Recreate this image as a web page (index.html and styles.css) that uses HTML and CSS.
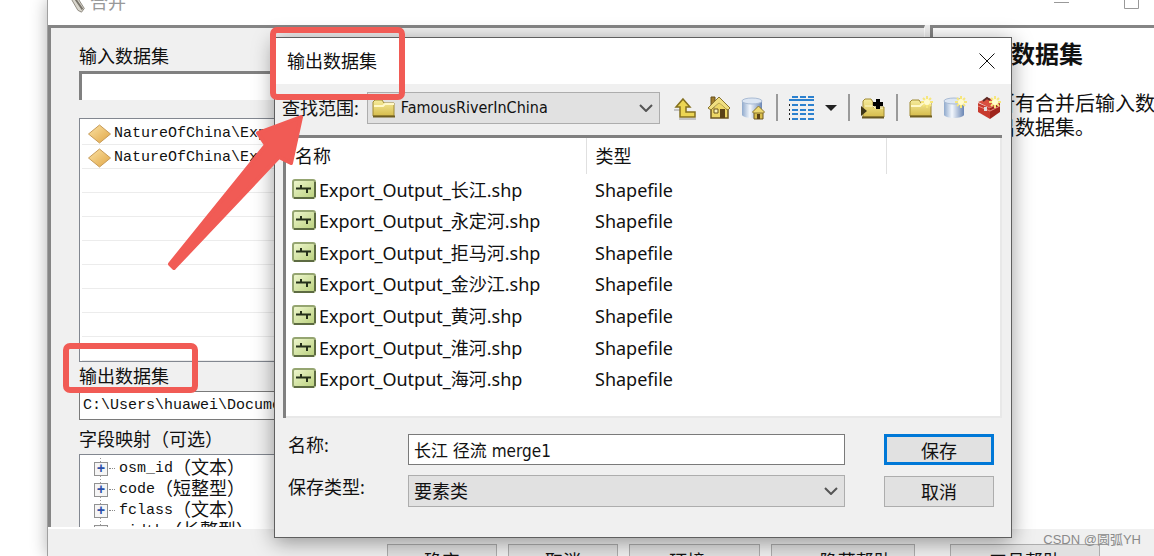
FILE: index.html
```html
<!DOCTYPE html>
<html lang="zh-CN">
<head>
  <meta charset="UTF-8">
  <meta name="viewport" content="width=device-width, initial-scale=1.0">
  <title>合并</title>
  <link rel="stylesheet" href="styles.css">
</head>
<body>
  <!-- Shared icons -->
  <svg class="defs" aria-hidden="true">
    <defs>
      <linearGradient id="gold" x1="0" y1="0" x2="0" y2="1">
        <stop offset="0" stop-color="#f6ec9c"/>
        <stop offset="1" stop-color="#d6bc4c"/>
      </linearGradient>
      <linearGradient id="amber" x1="0" y1="0" x2="1" y2="1">
        <stop offset="0" stop-color="#fbe3a6"/>
        <stop offset="1" stop-color="#e0a544"/>
      </linearGradient>
      <linearGradient id="steel" x1="0" y1="0" x2="1" y2="0">
        <stop offset="0" stop-color="#8fa9cc"/>
        <stop offset="0.4" stop-color="#f4f8fd"/>
        <stop offset="1" stop-color="#6a86b4"/>
      </linearGradient>
      <linearGradient id="green" x1="0" y1="0" x2="1" y2="1">
        <stop offset="0" stop-color="#f0f8d0"/>
        <stop offset="1" stop-color="#b9d07c"/>
      </linearGradient>
    </defs>
    <symbol id="diamond" viewBox="0 0 24 20">
      <path d="M1 10 12 1l11 9-11 9z" fill="url(#amber)" stroke="#c79b58"/>
    </symbol>
    <symbol id="folder" viewBox="0 0 24 20">
      <path d="M1 18V4l2-2h7l2 3h10v13z" fill="url(#gold)" stroke="#a08a35"/>
      <path d="M2 8h9l2-2h9" fill="none" stroke="#fff8c8" stroke-width="2"/>
      <path d="M1 18.500h22" stroke="#6e5d20" stroke-width="2"/>
    </symbol>
    <symbol id="line" viewBox="0 0 24 20">
      <rect x="1" y="1" width="22" height="18" rx="2" fill="url(#green)" stroke="#95a571" stroke-width="2"/>
      <path d="M2 19h20M23 3v15" stroke="#5d6b42" stroke-width="2"/>
      <path d="M4 9.500h15M9 6v4M15 9v5" fill="none" stroke="#25301a" stroke-width="2"/>
    </symbol>
    <symbol id="spark" viewBox="0 0 12 12">
      <path d="M6 0v12M0 6h12M2 2l8 8M10 2l-8 8" stroke="#f6e67c" stroke-width="2"/>
      <circle cx="6" cy="6" r="3" fill="#fffbd0"/>
    </symbol>
    <symbol id="cylinder" viewBox="0 0 24 24">
      <path d="M1 5v14c2 4 18 4 20 0V5z" fill="url(#steel)"/>
      <ellipse cx="11" cy="5" rx="10" ry="3" fill="#dce6f3" stroke="#a9bbd4"/>
    </symbol>
  </svg>

  <!-- Merge tool window -->
  <div class="window">
    <div class="window-title">
      <svg class="hammer" viewBox="0 0 20 26"><path d="M1 3 7 1l12 19-3 4-4-2z" fill="#d8d5cc" stroke="#8a867c"/><path d="M6 5l11 16" stroke="#77736a" stroke-width="2"/></svg>
      <span>合并</span>
      <div class="window-controls">
        <svg width="16" height="14"><path d="M0 8.500h15" stroke="#999"/></svg>
        <svg width="16" height="16"><path d="M.5.5h14v14H.5z" fill="none" stroke="#999"/></svg>
      </div>
    </div>

    <div class="panels">
      <div class="params">
        <label for="inputData">输入数据集</label>
        <input type="text" id="inputData" class="sunken">
        <ul class="datasets">
          <li><svg><use href="#diamond"/></svg>NatureOfChina\Export_Output_2</li>
          <li><svg><use href="#diamond"/></svg>NatureOfChina\Export_Output_3</li>
          <li></li>
          <li></li>
          <li></li>
          <li></li>
          <li></li>
          <li></li>
          <li></li>
          <li></li>
        </ul>
        <label for="outputData">输出数据集</label>
        <input type="text" id="outputData" value="C:\Users\huawei\Documents\ArcGIS\Default.gdb">
        <div class="heading">字段映射（可选）</div>
        <ul class="fields">
          <li><button type="button" aria-label="osm_id">+</button><i></i>osm_id<span>（文本）</span></li>
          <li><button type="button" aria-label="code">+</button><i></i>code<span>（短整型）</span></li>
          <li><button type="button" aria-label="fclass">+</button><i></i>fclass<span>（文本）</span></li>
          <li><button type="button" aria-label="width">+</button><i></i>width<span>（长整型）</span></li>
        </ul>
      </div>
      <div class="help">
        <h2>输出数据集</h2>
        <p>包含所有合并后输入数据集的<br>新输出数据集。</p>
      </div>
    </div>

    <div class="window-buttons">
      <button type="button">确定</button>
      <button type="button">取消</button>
      <button type="button" class="medium">环境...</button>
      <button type="button" class="wide">&lt;&lt; 隐藏帮助</button>
      <button type="button" class="wide last">工具帮助</button>
    </div>
  </div>

  <!-- Output dataset dialog -->
  <div class="dialog" role="dialog" aria-labelledby="dialogTitle">
    <div class="dialog-title">
      <span id="dialogTitle">输出数据集</span>
      <button type="button" aria-label="关闭"><svg width="16" height="16"><path d="M.5.5l15 15M15.500.5l-15 15" stroke="#111"/></svg></button>
    </div>

    <div class="toolbar">
      <label for="lookIn">查找范围:</label>
      <div class="select look-in">
        <svg class="folder"><use href="#folder"/></svg>
        <select id="lookIn"><option>FamousRiverInChina</option></select>
        <svg class="chevron" viewBox="0 0 14 8"><path d="M1 1l6 6 6-6"/></svg>
      </div>
      <div class="tools">
        <button type="button" aria-label="向上一级">
          <svg viewBox="0 0 24 24"><path d="M1 14h7M6 23h17" stroke="#c4c4c4" stroke-width="2"/><path d="M10 3l7 8h-4v5h9v5H7V11H3z" fill="#ecd654" stroke="#84701f" stroke-width="1.500"/></svg>
        </button>
        <button type="button" aria-label="主目录">
          <svg viewBox="0 0 24 24"><path d="M4 1h4v8H4z" fill="#a07c2c" stroke="#66501c"/><path d="M4 12h17v10H4z" fill="#edd766" stroke="#6c5720" stroke-width="1.500"/><path d="M12 1l11 11-2 2-2-1-7-6-8 7-3-2z" fill="#f0df80" stroke="#8a7430"/><path d="M12 7l7 6v1H5z" fill="#edd766"/><path d="M7 13h4v4H7z" fill="#fbf3b8" stroke="#6c5720"/><path d="M13 13h5v9h-5z" fill="#5b4317"/></svg>
        </button>
        <button type="button" aria-label="默认地理数据库">
          <svg viewBox="0 0 24 24"><use href="#cylinder"/><path d="M13 16h9v7h-9z" fill="#d9be4c" stroke="#6c5720"/><path d="M17.500 10l6 6-1 1h-10l-1-1z" fill="#eed970" stroke="#8a7430"/><path d="M16 18h3v5h-3z" fill="#5b4317"/></svg>
        </button>
        <i class="separator"></i>
        <button type="button" class="views" aria-label="视图">
          <svg viewBox="0 0 26 24"><path d="M3 1h22" stroke="#2c81cf" stroke-width="2" stroke-dasharray="6 2"/><path d="M0 4h25" stroke="#2c81cf" stroke-width="2"/><path d="M3 9h22M3 14h22M3 18h22M3 23h22" stroke="#2c81cf" stroke-width="2" stroke-dasharray="6 2"/><path d="M0 9h1M0 14h1M0 18h1M0 23h1" stroke="#222" stroke-width="2"/></svg>
          <svg class="caret" viewBox="0 0 12 6"><path d="M0 0h12L6 6z" fill="#222"/></svg>
        </button>
        <i class="separator"></i>
        <button type="button" aria-label="连接到文件夹">
          <svg viewBox="0 0 24 24"><path d="M2 20V5l2-2h6l2 3v5h11v10H2z" fill="url(#gold)" stroke="#a08a35"/><path d="M4 10h8l2 2h8" fill="none" stroke="#fff8c8"/><path d="M1 21.500h22" stroke="#665622" stroke-width="2"/><path d="M0 10l6 5-6 5z" fill="#3e3617"/><path d="M12 8h10M17 3v10" stroke="#000" stroke-width="4"/></svg>
        </button>
        <i class="separator"></i>
        <button type="button" aria-label="新建文件夹">
          <svg viewBox="0 0 24 24"><use href="#folder" y="2" width="24" height="20"/><use href="#spark" x="12" y="0" width="12" height="12"/></svg>
        </button>
        <button type="button" aria-label="新建数据库">
          <svg viewBox="0 0 24 24"><use href="#cylinder"/><use href="#spark" x="12" y="0" width="12" height="12"/></svg>
        </button>
        <button type="button" aria-label="新建工具箱">
          <svg viewBox="0 0 24 24"><path d="M1 7l12 5v11L1 16z" fill="#c83a2e"/><path d="M13 12l10-5v9l-10 7z" fill="#9e241c"/><path d="M1 6l11-4 11 5-10 5z" fill="#d9503f"/><path d="M6 5l4-3 3 2" fill="none" stroke="#5d2a25" stroke-width="2"/><path d="M1 10l12 5 10-5" fill="none" stroke="#ec8c80"/><path d="M7 11h3v4H7z" fill="#ddd"/><use href="#spark" x="12" y="0" width="12" height="12"/></svg>
        </button>
      </div>
    </div>

    <div class="files">
      <table>
        <thead>
          <tr><th>名称</th><th>类型</th><th></th></tr>
        </thead>
        <tbody>
          <tr><td><svg><use href="#line"/></svg>Export_Output_长江.shp</td><td>Shapefile</td><td></td></tr>
          <tr><td><svg><use href="#line"/></svg>Export_Output_永定河.shp</td><td>Shapefile</td><td></td></tr>
          <tr><td><svg><use href="#line"/></svg>Export_Output_拒马河.shp</td><td>Shapefile</td><td></td></tr>
          <tr><td><svg><use href="#line"/></svg>Export_Output_金沙江.shp</td><td>Shapefile</td><td></td></tr>
          <tr><td><svg><use href="#line"/></svg>Export_Output_黄河.shp</td><td>Shapefile</td><td></td></tr>
          <tr><td><svg><use href="#line"/></svg>Export_Output_淮河.shp</td><td>Shapefile</td><td></td></tr>
          <tr><td><svg><use href="#line"/></svg>Export_Output_海河.shp</td><td>Shapefile</td><td></td></tr>
        </tbody>
      </table>
    </div>

    <form class="save-form">
      <label for="fileName">名称:</label>
      <input type="text" id="fileName" value="长江 径流 merge1">
      <button type="button" class="default">保存</button>
      <label for="fileType">保存类型:</label>
      <div class="select">
        <select id="fileType"><option>要素类</option></select>
        <svg class="chevron" viewBox="0 0 14 8"><path d="M1 1l6 6 6-6"/></svg>
      </div>
      <button type="button">取消</button>
    </form>
  </div>

  <!-- Red marks over the windows -->
  <div class="mark mark-title"></div>
  <div class="mark mark-output"></div>
  <svg class="arrow" viewBox="0 0 140 158"><path d="M134 5 91 21l8 12L3 152l4 4L112 45l12 6z"/></svg>
  <div class="watermark">CSDN @圆弧YH</div>
</body>
</html>
```

FILE: styles.css
```css
* {
  box-sizing: border-box;
}
body {
  position: relative;
  display: flex;
  height: 100vh;
  margin: 0;
  overflow: hidden;
  background: #fff;
  color: #111;
  font-family: "Noto Sans", "Noto Sans CJK SC", sans-serif;
  font-size: 18px;
  line-height: 24px;
}
button, input, select {
  margin: 0;
  color: #111;
  font-family: inherit;
  font-size: 18px;
  border-radius: 0;
}
.defs {
  position: absolute;
  width: 0;
  height: 0;
}

/* Merge tool window */
.window {
  display: flex;
  flex: 1;
  flex-direction: column;
  min-width: 0;
  margin-left: 47px;
  border-left: 1px solid #a0a0a0;
  background: #f0f0f0;
  box-shadow: 0 0 16px rgba(0, 0, 0, 0.3);
}
.window-title {
  display: flex;
  flex: none;
  align-items: center;
  gap: 4px;
  height: 46px;
  margin-top: -21px;
  padding: 0 14px 0 18px;
  background: #fff;
  color: #999;
}
.hammer {
  width: 20px;
  height: 24px;
}
.window-controls {
  display: flex;
  gap: 54px;
  margin-left: auto;
}
.panels {
  display: flex;
  flex: 1;
  gap: 5px;
  min-height: 0;
  border-bottom: 2px solid #fff;
}
.params {
  flex: 1;
  padding: 16px 28px 0;
  border: solid #858585;
  border-width: 3px 1px 0 3px;
  border-right-color: #fff;
  overflow: hidden;
}
.params label, .heading {
  display: block;
  height: 27px;
  line-height: 24px;
}
.params input {
  display: block;
  width: 100%;
  height: 29px;
  padding: 0 3px;
  border: 1px solid #7a7a7a;
  font: 15px "Liberation Mono", monospace;
}
.params .sunken {
  border: solid #808080;
  border-width: 3px 0 0 3px;
}
ul {
  margin: 0;
  padding: 0;
  list-style: none;
  background: #fff;
  border: 1px solid #828790;
  font-family: "Liberation Mono", "Noto Sans CJK SC", monospace;
  font-size: 15px;
}
.datasets {
  height: 244px;
  margin: 18px 0 2px;
  padding: 2px;
  overflow: hidden;
}
.datasets li {
  display: flex;
  align-items: center;
  gap: 2px;
  height: 24px;
  padding: 2px 0 0 5px;
  border-bottom: 1px solid #ececec;
  white-space: nowrap;
}
.datasets svg {
  width: 25px;
  height: 20px;
}
.heading {
  margin-top: 7px;
}
.fields {
  padding: 3px 0 0 14px;
}
.fields li {
  display: flex;
  align-items: center;
  height: 21px;
  background: repeating-linear-gradient(#999 0 1px, #fff 1px 3px) 6px 0 / 1px 100% no-repeat;
  white-space: nowrap;
}
.fields li span {
  font-size: 18px;
}
.fields button {
  width: 14px;
  height: 14px;
  padding: 0;
  border: 1px solid #919191;
  background: #f5f5f5;
  color: #2b4fa8;
  font-size: 14px;
  font-weight: bold;
  line-height: 10px;
}
.fields i {
  width: 6px;
  margin: 0 4px 0 1px;
  border-top: 1px dotted #888;
}
.help {
  width: 224px;
  padding: 12px 0 0 22px;
  border: solid #858585;
  border-width: 3px 0 0 3px;
  background: #fff;
  white-space: nowrap;
}
.help h2 {
  margin: 0 8px 24px;
  font-size: 24px;
  line-height: 28px;
}
.help p {
  margin: 0;
  font-size: 20px;
}
.window-buttons {
  display: flex;
  flex: none;
  gap: 11px;
  justify-content: flex-end;
  margin-bottom: -34px;
  padding: 15px 54px 15px 0;
}
.window-buttons button, .save-form button {
  width: 110px;
  height: 31px;
  padding: 0;
  border: 1px solid #adadad;
  background: #e1e1e1;
}
.window-buttons .medium {
  width: 131px;
}
.window-buttons .wide {
  width: 144px;
}
.window-buttons .last {
  width: 150px;
  margin-left: 24px;
}

/* Output dataset dialog */
.dialog {
  position: absolute;
  top: 37px;
  right: 142px;
  left: 274px;
  border: 1px solid #5f5f5f;
  background: #f0f0f0;
  box-shadow: 0 4px 20px rgba(0, 0, 0, 0.4);
}
.dialog-title {
  display: flex;
  align-items: center;
  justify-content: space-between;
  height: 46px;
  padding: 0 16px 0 12px;
  background: #fff;
}
.dialog-title button {
  display: flex;
  padding: 0;
  border: 0;
  background: none;
}
.toolbar {
  display: flex;
  align-items: center;
  gap: 8px;
  height: 51px;
  padding: 0 10px 4px 7px;
}
.select {
  position: relative;
  display: flex;
  align-items: center;
  height: 32px;
  border: 1px solid #adadad;
  background: #e1e1e1;
}
.look-in {
  flex: 1;
}
.select select {
  flex: 1;
  width: 100%;
  height: 30px;
  padding: 0 5px;
  border: 0;
  background: none;
  appearance: none;
}
.look-in select {
  padding-left: 5px;
  font-family: "DejaVu Sans Condensed", "Noto Sans", sans-serif;
  font-size: 16px;
}
.folder {
  width: 24px;
  height: 20px;
  margin-left: 4px;
}
.chevron {
  position: absolute;
  right: 6px;
  width: 14px;
  height: 8px;
  fill: none;
  stroke: #555;
  stroke-width: 2;
  pointer-events: none;
}
.tools {
  display: flex;
  align-items: center;
  gap: 10px;
  padding-left: 5px;
}
.tools button {
  display: flex;
  align-items: center;
  gap: 10px;
  padding: 0;
  border: 0;
  background: none;
}
.tools svg {
  width: 24px;
  height: 24px;
}
.tools .views svg {
  width: 26px;
}
.tools .views .caret {
  width: 12px;
  height: 6px;
}
.separator {
  width: 2px;
  height: 27px;
  margin: 0 1px;
  background: #9a9a9a;
}
.files {
  height: 283px;
  margin: 0 9px 0 8px;
  border: solid #808080;
  border-width: 3px 0 0 3px;
  box-shadow: inset -2px -2px #e8e8e8;
  background: #fff;
}
.files table {
  width: 100%;
  height: 257px;
  border-collapse: collapse;
  table-layout: fixed;
}
.files th, .files td {
  padding: 0 0 0 9px;
  font-weight: normal;
  text-align: left;
  white-space: nowrap;
}
.files th {
  height: 36px;
  border-right: 1px solid #e0e0e0;
}
.files th:first-child, .files th:nth-child(2) {
  width: 300px;
}
.files th:last-child {
  border: 0;
}
.files td:first-child {
  padding-left: 6px;
}
.files td svg {
  width: 24px;
  height: 20px;
  margin-right: 3px;
  vertical-align: -2px;
}
.save-form {
  display: grid;
  grid-template-columns: 120px 1fr 149px;
  row-gap: 10px;
  align-items: center;
  margin: 0;
  padding: 15px 17px 30px 13px;
}
.save-form label {
  height: 32px;
}
.save-form input {
  width: 100%;
  height: 31px;
  padding: 0 5px;
  border: 1px solid #7a7a7a;
  font-family: "DejaVu Sans Condensed", "Noto Sans CJK SC", sans-serif;
  font-size: 17px;
}
.save-form button {
  margin-left: 39px;
}
.save-form .default {
  border: 3px solid #0078d7;
}

/* Red marks */
.mark {
  position: absolute;
  border: 6px solid #f15b55;
  border-radius: 7px;
}
.mark-title {
  top: 27px;
  left: 270px;
  width: 135px;
  height: 73px;
}
.mark-output {
  top: 343px;
  left: 63px;
  width: 135px;
  height: 50px;
}
.arrow {
  position: absolute;
  top: 112px;
  left: 167px;
  width: 140px;
  height: 158px;
  fill: #f15b55;
  stroke: #f15b55;
  stroke-width: 4;
  stroke-linejoin: round;
}
.watermark {
  position: absolute;
  right: 13px;
  bottom: 4px;
  color: #8a8a8a;
  font-family: "Liberation Sans", "Noto Sans CJK SC", sans-serif;
  font-size: 13px;
}
```
